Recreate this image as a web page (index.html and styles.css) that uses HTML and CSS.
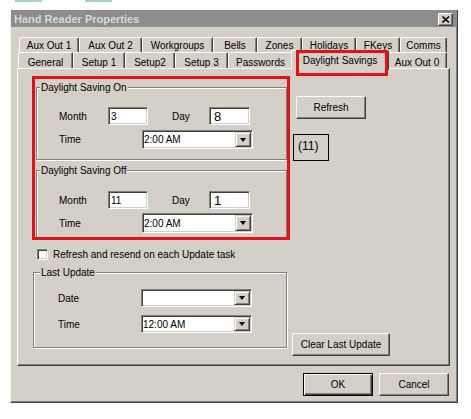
FILE: index.html
```html
<!DOCTYPE html>
<html lang="en">
<head>
    <meta charset="UTF-8">
    <title>Hand Reader Properties</title>
    <link rel="stylesheet" href="styles.css">
</head>
<body>
    <div class="scrap"><span></span><span></span></div>

    <div class="window">
        <div class="titlebar">
            <span class="title">Hand Reader Properties</span>
            <button class="close">
                <svg width="8" height="7" viewBox="0 0 8 7"><path d="M0.5 0.5 L7 6.5 M7 0.5 L0.5 6.5" stroke="#000" stroke-width="1.6"/></svg>
            </button>
        </div>

        <div class="tabs">
            <div class="tab-row back">
                <div class="tab">Aux Out 1</div>
                <div class="tab">Aux Out 2</div>
                <div class="tab">Workgroups</div>
                <div class="tab">Bells</div>
                <div class="tab">Zones</div>
                <div class="tab">Holidays</div>
                <div class="tab">FKeys</div>
                <div class="tab">Comms</div>
            </div>
            <div class="tab-row front">
                <div class="tab">General</div>
                <div class="tab">Setup 1</div>
                <div class="tab">Setup2</div>
                <div class="tab">Setup 3</div>
                <div class="tab">Passwords</div>
                <div class="tab selected">Daylight Savings</div>
                <div class="tab">Aux Out 0</div>
            </div>
        </div>

        <div class="panel">
            <div class="col-left">
                <div class="red-box">
                    <div class="group first">
                        <div class="group-title">Daylight Saving On</div>
                        <div class="row month-row">
                            <span class="lbl">Month</span>
                            <div class="field month">3</div>
                            <span class="lbl day-lbl">Day</span>
                            <div class="field day">8</div>
                        </div>
                        <div class="row time-row">
                            <span class="lbl wide">Time</span>
                            <div class="field select"><span class="value">2:00 AM</span><span class="drop"><i></i></span></div>
                        </div>
                    </div>
                    <div class="group second">
                        <div class="group-title">Daylight Saving Off</div>
                        <div class="row month-row">
                            <span class="lbl">Month</span>
                            <div class="field month">11</div>
                            <span class="lbl day-lbl">Day</span>
                            <div class="field day">1</div>
                        </div>
                        <div class="row time-row">
                            <span class="lbl wide">Time</span>
                            <div class="field select tall"><span class="value">2:00 AM</span><span class="drop"><i></i></span></div>
                        </div>
                    </div>
                </div>

                <label class="check-row">
                    <span class="checkbox"></span>
                    <span>Refresh and resend on each Update task</span>
                </label>

                <div class="group last-update">
                    <div class="group-title">Last Update</div>
                    <div class="row date-row">
                        <span class="lbl wide">Date</span>
                        <div class="field select"><span class="value"></span><span class="drop"><i></i></span></div>
                    </div>
                    <div class="row time-row">
                        <span class="lbl wide">Time</span>
                        <div class="field select"><span class="value">12:00 AM</span><span class="drop"><i></i></span></div>
                    </div>
                </div>
            </div>

            <div class="col-right">
                <button class="btn refresh">Refresh</button>
                <div class="count">(11)</div>
                <button class="btn clear">Clear Last Update</button>
            </div>
        </div>

        <div class="footer">
            <button class="btn default">OK</button>
            <button class="btn">Cancel</button>
        </div>
    </div>
</body>
</html>
```

FILE: styles.css
```css
html {
    box-sizing: border-box;
}

*, *::after, *::before {
    box-sizing: inherit;
}

body {
    margin: 0;
    background: #fff;
    font-family: 'Liberation Sans', Arial, sans-serif;
    font-size: 10px;
    color: #000;
}

/* bits of the page cut off above the dialog */
.scrap {
    display: flex;
    align-items: flex-start;
    gap: 43px;
    height: 10px;
    padding-left: 15px;
}

.scrap span {
    width: 27px;
    height: 2px;
    background: #a6d2cd;
}

.window {
    margin-left: 10px;
    width: 448px;
    height: 393px;
    background: #d4d0c8;
    border-left: 1px solid #f4f3ef;
    border-right: 1px solid #404040;
    border-bottom: 1px solid #404040;
    box-shadow: inset -1px -1px #808080;
}

.titlebar {
    display: flex;
    align-items: center;
    justify-content: space-between;
    height: 17px;
    padding: 0 4px 0 3px;
    background: #8d8d8d;
}

.title {
    font-size: 11px;
    font-weight: bold;
    color: #d9d9d9;
}

.close {
    display: flex;
    align-items: center;
    justify-content: center;
    width: 15px;
    height: 13px;
    margin-top: 1px;
    padding: 0;
    background: #d4d0c8;
    border: 1px solid;
    border-color: #fff #404040 #404040 #fff;
    box-shadow: inset -1px -1px #808080;
}

/* tabs */
.tabs {
    margin: 10px 7px 0 6px;
}

.tab-row {
    display: flex;
}

.tab-row.back {
    height: 15px;
    margin: 0 3px 0 2px;
}

.tab-row.front {
    height: 16px;
    margin: 0 3px 0 1px;
}

.tab {
    display: flex;
    align-items: center;
    justify-content: center;
    flex: none;
    background: #d4d0c8;
    border: 1px solid;
    border-bottom: 0;
    border-color: #fff #404040 transparent #fff;
    border-radius: 2px 2px 0 0;
    box-shadow: inset -1px 0 #808080;
    white-space: nowrap;
}

.front .tab {
    padding-top: 3px;
}

.back .tab:nth-child(1) { width: 60px; }
.back .tab:nth-child(2) { width: 63px; }
.back .tab:nth-child(3) { width: 71px; }
.back .tab:nth-child(4) { width: 44px; }
.back .tab:nth-child(5) { width: 45px; }
.back .tab:nth-child(6) { width: 54px; }
.back .tab:nth-child(7) { width: 44px; }
.back .tab:nth-child(8) { width: 47px; }

.front .tab:nth-child(1) { width: 55px; }
.front .tab:nth-child(2) { width: 52px; }
.front .tab:nth-child(3) { width: 50px; }
.front .tab:nth-child(4) { width: 53px; }
.front .tab:nth-child(5) { width: 65px; }
.front .tab:nth-child(7) { width: 60px; }

.tab.selected {
    position: relative;
    z-index: 2;
    align-self: flex-start;
    width: 98px;
    height: 20px;
    margin: -2px -2px 0;
    padding-top: 0;
}

/* red annotation round the selected tab */
.tab.selected::after {
    content: '';
    position: absolute;
    left: 4px;
    top: -1px;
    width: 92px;
    height: 26px;
    border: 3px solid #e2121b;
}

.panel {
    display: flex;
    height: 298px;
    margin: 0 7px 0 6px;
    padding: 7px 0 0 14px;
    border: 1px solid;
    border-color: #fff #404040 #404040 #fff;
    box-shadow: inset -1px -1px #808080;
}

.col-left {
    width: 258px;
    flex: none;
}

.red-box {
    height: 164px;
    overflow: hidden;
    border: 3px solid #e2121b;
}

.group {
    margin-left: 1px;
    border: 1px solid #808080;
    box-shadow: inset 1px 1px #fff, 1px 1px #fff;
}

.group-title {
    width: fit-content;
    margin: -7px 0 0 3px;
    padding: 0 1px;
    line-height: 13px;
    background: #d4d0c8;
}

.group.first {
    margin-top: 8px;
    padding-bottom: 10px;
}

.group.second {
    margin-top: 10px;
    padding-bottom: 10px;
}

.row {
    display: flex;
    align-items: center;
    padding-left: 22px;
}

.first .month-row { margin-top: 13px; }
.first .time-row { margin-top: 5px; }
.second .month-row { margin-top: 14px; }
.second .time-row { margin-top: 4px; }

.lbl {
    width: 49px;
    flex: none;
}

.lbl.wide {
    width: 83px;
}

.lbl.day-lbl {
    width: 37px;
    margin-left: 24px;
}

.field {
    display: flex;
    align-items: center;
    flex: none;
    height: 18px;
    padding: 1px;
    background: #fff;
    border: 1px solid;
    border-color: #808080 #fff #fff #808080;
    box-shadow: inset 1px 1px #404040, inset -1px -1px #d4d0c8;
    white-space: nowrap;
}

.field.month {
    width: 40px;
    padding-left: 2px;
}

.field.day {
    width: 41px;
    padding-left: 4px;
    font-size: 13px;
}

.field.select {
    width: 111px;
    height: 19px;
}

.field.select.tall {
    height: 20px;
}

.value {
    flex: 1;
}

.drop {
    display: flex;
    align-items: center;
    justify-content: center;
    align-self: stretch;
    width: 16px;
    background: #d4d0c8;
    border: 1px solid;
    border-color: #d4d0c8 #404040 #404040 #d4d0c8;
    box-shadow: inset 1px 1px #fff, inset -1px -1px #808080;
}

.drop i {
    width: 1px;
    height: 0;
    border-top: 4px solid #000;
    border-left: 3px solid transparent;
    border-right: 3px solid transparent;
}

.check-row {
    display: flex;
    align-items: center;
    height: 13px;
    margin-top: 8px;
    padding-left: 5px;
}

.checkbox {
    width: 11px;
    height: 11px;
    margin-right: 5px;
    background: #fff;
    border: 1px solid;
    border-color: #808080 #fff #fff #808080;
    box-shadow: inset 1px 1px #404040, inset -1px -1px #d4d0c8;
}

.group.last-update {
    margin: 11px 3px 0 1px;
    padding-bottom: 14px;
}

.last-update .group-title {
    margin-left: 6px;
}

.last-update .row {
    padding-left: 24px;
}

.last-update .date-row { margin-top: 10px; }
.last-update .time-row { margin-top: 8px; }

.last-update .field.select {
    height: 18px;
}

/* right column */
.col-right {
    display: flex;
    flex-direction: column;
    align-items: flex-start;
}

.btn {
    height: 23px;
    padding: 0;
    font: inherit;
    color: #000;
    background: #d4d0c8;
    border: 1px solid;
    border-color: #fff #404040 #404040 #fff;
    box-shadow: inset -1px -1px #808080;
}

.btn.refresh {
    width: 70px;
    margin: 20px 0 0 6px;
}

.count {
    width: 36px;
    height: 27px;
    margin: 15px 0 0 3px;
    padding: 4px 0 0 4px;
    border: 1px solid #000;
    font-size: 12px;
    line-height: 14px;
}

.btn.clear {
    width: 98px;
    margin: 172px 0 0 2px;
}

.footer {
    display: flex;
    justify-content: flex-end;
    gap: 6px;
    margin-top: 7px;
    padding-right: 8px;
}

.footer .btn {
    width: 70px;
}

.btn.default {
    border: 1px solid #000;
    box-shadow: inset 1px 1px #fff, inset -1px -1px #404040, inset -2px -2px #808080;
}
```
